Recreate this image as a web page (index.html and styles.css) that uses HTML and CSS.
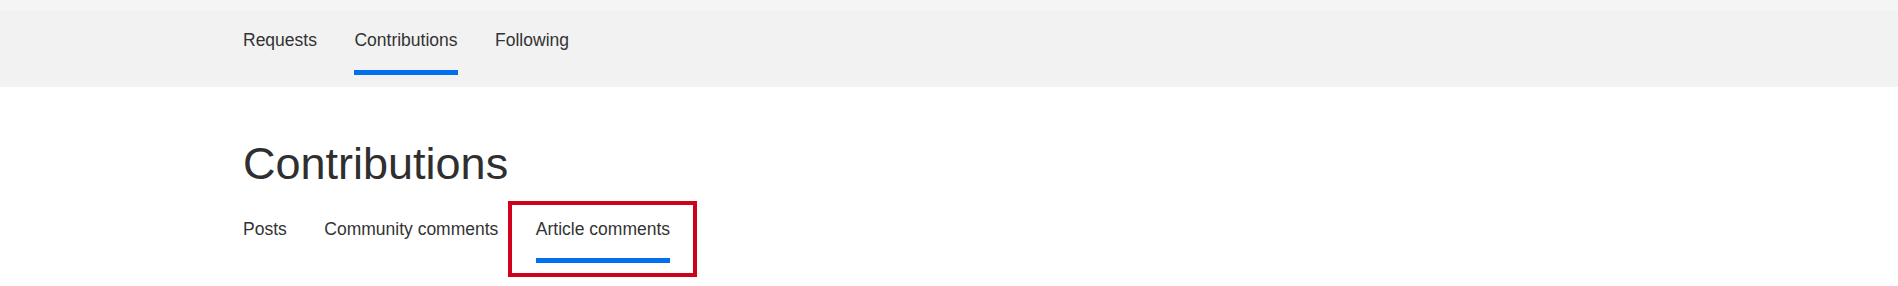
FILE: index.html
```html
<!DOCTYPE html>
<html lang="en">
<head>
<meta charset="utf-8">
<title>Contributions</title>
<link rel="stylesheet" href="styles.css">
</head>
<body>
<div class="top-strip"></div>
<header class="subnav">
  <nav class="subnav-list">
    <a class="subnav-item" href="#">Requests</a>
    <a class="subnav-item is-active" href="#">Contributions</a>
    <a class="subnav-item" href="#">Following</a>
  </nav>
</header>
<main class="content">
  <h1 class="page-title">Contributions</h1>
  <nav class="tabs">
    <a class="tab" href="#">Posts</a>
    <a class="tab" href="#">Community comments</a>
    <a class="tab is-active is-highlighted" href="#">Article comments</a>
  </nav>
</main>
</body>
</html>
```
FILE: styles.css
```css
html, body {
  margin: 0;
  padding: 0;
  background: #ffffff;
}

body {
  font-family: "Liberation Sans", Arial, sans-serif;
  color: #333333;
  min-height: 286px;
}

a {
  color: inherit;
  text-decoration: none;
}

.top-strip {
  height: 11px;
  background: #f5f5f5;
}

.subnav {
  height: 76px;
  background: #f2f2f2;
  box-sizing: border-box;
  padding-left: 243px;
}

.subnav-list {
  display: flex;
  gap: 37.5px;
  padding-top: 18.7px;
}

.subnav-item {
  display: flex;
  flex-direction: column;
  font-size: 17.5px;
  line-height: 20px;
}

.subnav-item::after {
  content: "";
  display: block;
  height: 5px;
  margin-top: 20.3px;
  background: transparent;
}

.subnav-item.is-active::after {
  background: #0070f0;
}

.content {
  padding-left: 243px;
  padding-bottom: 23px;
}

.page-title {
  margin: 0;
  padding-top: 51px;
  font-size: 45px;
  font-weight: normal;
  line-height: 52px;
  color: #2f2f2f;
}

.tabs {
  display: flex;
  gap: 37.5px;
  margin-top: 28.7px;
}

.tab {
  position: relative;
  display: flex;
  flex-direction: column;
  font-size: 17.5px;
  line-height: 20px;
}

.tab::after {
  content: "";
  display: block;
  height: 5px;
  margin-top: 19.3px;
  background: transparent;
}

.tab.is-active::after {
  background: #0070f0;
}

.tab.is-highlighted::before {
  content: "";
  position: absolute;
  top: -17.7px;
  left: -28px;
  right: -27px;
  bottom: -14px;
  border: 4px solid #d0021b;
  pointer-events: none;
}
```
